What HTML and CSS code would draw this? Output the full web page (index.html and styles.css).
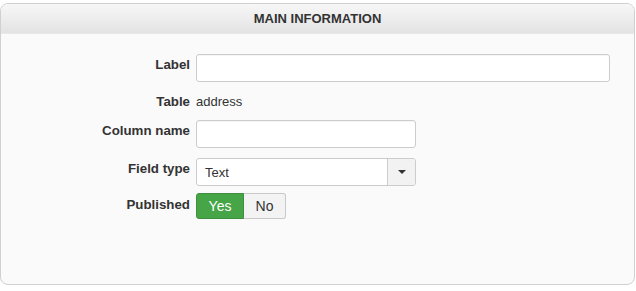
FILE: index.html
```html
<!DOCTYPE html>
<html lang="en">
  <head>
    <meta charset="UTF-8" />
    <title>Main information</title>
    <link rel="stylesheet" href="styles.css">
  </head>
  <body>
    <!-- PANEL -->
    <section class="panel">
      <h2 class="panel-head">Main information</h2>

      <div class="panel-body">
        <div class="row">
          <label class="row-label">Label</label>
          <input class="field field-wide" type="text" />
        </div>

        <div class="row row-text">
          <span class="row-label">Table</span>
          <span class="value">address</span>
        </div>

        <div class="row">
          <label class="row-label">Column name</label>
          <input class="field field-mid" type="text" />
        </div>

        <div class="row">
          <label class="row-label">Field type</label>
          <div class="select">
            <span class="select-text">Text</span>
            <span class="select-btn"><span class="caret"></span></span>
          </div>
        </div>

        <div class="row row-toggle">
          <span class="row-label">Published</span>
          <div class="toggle">
            <button class="toggle-btn on">Yes</button>
            <button class="toggle-btn">No</button>
          </div>
        </div>
      </div>
    </section>
  </body>
</html>
```

FILE: styles.css
```css
body {
  margin: 0;
  padding: 3px 1px 0 0;
  background-color: #fff;
  font-family: "Liberation Sans", Arial, sans-serif;
  font-size: 13px;
  color: #333;
}
.panel {
  height: 280px;
  border: 1px solid #d0d0d0;
  border-radius: 8px;
  background-color: #fafafa;
  overflow: hidden;
}
.panel-head {
  margin: 0;
  height: 29px;
  line-height: 29px;
  text-align: center;
  font-size: 13px;
  font-weight: bold;
  text-transform: uppercase;
  color: #333;
  background: linear-gradient(#f7f7f7, #e3e3e3);
  border-bottom: 1px solid #e8e8e8;
}
.panel-body {
  padding: 20px 24px 0 0;
}
.row {
  display: flex;
  align-items: flex-start;
  gap: 6px;
  margin-bottom: 10px;
}
.row-label {
  width: 189px;
  flex: none;
  padding-top: 2px;
  line-height: 18px;
  text-align: right;
  font-size: 13.3px;
  font-weight: bold;
}
.row-text {
  height: 18px;
}
.row-text .value,
.row-text .row-label {
  padding-top: 1px;
}
.value {
  line-height: 18px;
}
.row-toggle {
  margin-top: -3px;
}
.row-toggle .row-label {
  padding-top: 3px;
}
.field {
  box-sizing: border-box;
  height: 28px;
  margin: 0;
  border: 1px solid #ccc;
  border-radius: 3px;
  background-color: #fff;
  box-shadow: inset 0 1px 1px rgba(0, 0, 0, 0.04);
}
.field-wide {
  flex: 1;
}
.field-mid {
  width: 220px;
}
.select {
  box-sizing: border-box;
  display: flex;
  width: 220px;
  height: 28px;
  border: 1px solid #ccc;
  border-radius: 3px;
  background-color: #fff;
  overflow: hidden;
}
.select-text {
  flex: 1;
  padding-left: 8px;
  line-height: 28px;
  color: #333;
}
.select-btn {
  display: flex;
  align-items: center;
  justify-content: center;
  width: 27px;
  border-left: 1px solid #ccc;
  background-color: #f2f2f2;
}
.caret {
  width: 0;
  height: 0;
  border-left: 4px solid transparent;
  border-right: 4px solid transparent;
  border-top: 4px solid #333;
}
.toggle {
  display: flex;
}
.toggle-btn {
  height: 26px;
  margin: 0;
  padding: 0;
  font-family: inherit;
  font-size: 14px;
  color: #333;
  background-color: #f3f3f3;
  border: 1px solid #c8c8c8;
  cursor: pointer;
}
.toggle-btn:first-child {
  width: 48px;
  border-radius: 3px 0 0 3px;
}
.toggle-btn:last-child {
  width: 42px;
  border-left: none;
  border-radius: 0 3px 3px 0;
}
.toggle-btn.on {
  background-color: #46a546;
  border-color: #3d8f3d;
  color: #fff;
}
```
